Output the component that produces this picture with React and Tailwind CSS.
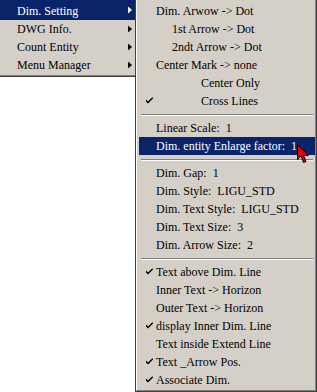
import React from "react";

const leftItems = [
  { label: "Dim. Setting", active: true },
  { label: "DWG Info." },
  { label: "Count Entity" },
  { label: "Menu Manager" },
];

// submenu rows; "sep" marks a separator line
const subItems = [
  { label: "Dim. Arwow -> Dot" },
  { label: "1st Arrow -> Dot", indent: 1 },
  { label: "2ndt Arrow -> Dot", indent: 1 },
  { label: "Center Mark -> none" },
  { label: "Center Only", indent: 2 },
  { label: "Cross Lines", indent: 2, checked: true },
  { sep: true },
  { label: "Linear Scale:  1" },
  { label: "Dim. entity Enlarge factor:  1", active: true },
  { sep: true },
  { label: "Dim. Gap:  1" },
  { label: "Dim. Style:  LIGU_STD" },
  { label: "Dim. Text Style:  LIGU_STD" },
  { label: "Dim. Text Size:  3" },
  { label: "Dim. Arrow Size:  2" },
  { sep: true },
  { label: "Text above Dim. Line", checked: true },
  { label: "Inner Text -> Horizon" },
  { label: "Outer Text -> Horizon" },
  { label: "display Inner Dim. Line", checked: true },
  { label: "Text inside Extend Line" },
  { label: "Text _Arrow Pos.", checked: true },
  { label: "Associate Dim.", checked: true },
];

const Arrow = ({ color }) => (
  <svg width="4" height="7" viewBox="0 0 4 7" className="absolute right-[3px] top-1/2 -translate-y-1/2">
    <path d="M0 0 L4 3.5 L0 7 Z" fill={color} />
  </svg>
);

const Check = ({ color }) => (
  <svg width="7" height="7" viewBox="0 0 7 7" className="absolute left-[7px] top-1/2 -translate-y-1/2">
    <path d="M0 2 L0 4 L2 6 L7 1 L7 -1 L2 4 Z" fill={color} />
  </svg>
);

const Cursor = () => (
  <svg width="13" height="20" viewBox="0 0 13 20" className="absolute left-[297px] top-[144px]">
    <path
      d="M0.5 0.5 L0.5 15.5 L4 12 L6.5 18.5 L9 17.5 L6.5 11.5 L11.5 11.5 Z"
      fill="#e00000"
      stroke="#000"
      strokeWidth="1"
    />
  </svg>
);

export default function App() {
  return (
    <div
      className="relative w-[317px] h-[392px] bg-white flex items-start text-[12px] leading-none overflow-hidden"
      style={{ fontFamily: '"Liberation Serif", "Times New Roman", serif' }}
    >
      {/* main menu */}
      <div className="w-[135px] bg-[#d4d0c8] border-b border-b-[#404040] shadow-[inset_0_-1px_0_#808080] pb-[2px]">
        {leftItems.map((it, i) => (
          <div
            key={it.label}
            className={
              "relative flex items-center pl-[17px] " +
              (i === 0 ? "h-[20px] pt-[2px] " : "h-[18px] ") +
              (it.active ? "bg-[#0a246a] text-white" : "text-black")
            }
          >
            {it.label}
            <Arrow color={it.active ? "#fff" : "#000"} />
          </div>
        ))}
      </div>

      {/* submenu */}
      <div className="w-[182px] h-[392px] bg-[#d4d0c8] border-l border-l-[#404040] border-r border-r-[#404040] border-b border-b-[#404040]">
        <div className="h-full border-l border-l-white border-r border-r-[#808080] border-b border-b-[#808080] pt-[2px] pl-[2px] pr-0">
          {subItems.map((it, i) =>
            it.sep ? (
              <div key={i} className="h-[9px] flex items-center px-[2px]">
                <div className="w-full h-[2px] border-t border-t-[#808080] border-b border-b-white" />
              </div>
            ) : (
              <div
                key={i}
                className={
                  "relative h-[18px] flex items-center " +
                  (it.indent === 1 ? "pl-[33px] " : it.indent === 2 ? "pl-[62px] " : "pl-[17px] ") +
                  (it.active ? "bg-[#0a246a] text-white" : "text-black")
                }
              >
                {it.checked && <Check color={it.active ? "#fff" : "#000"} />}
                <span className="whitespace-pre">{it.label}</span>
              </div>
            )
          )}
        </div>
      </div>

      <Cursor />
    </div>
  );
}
